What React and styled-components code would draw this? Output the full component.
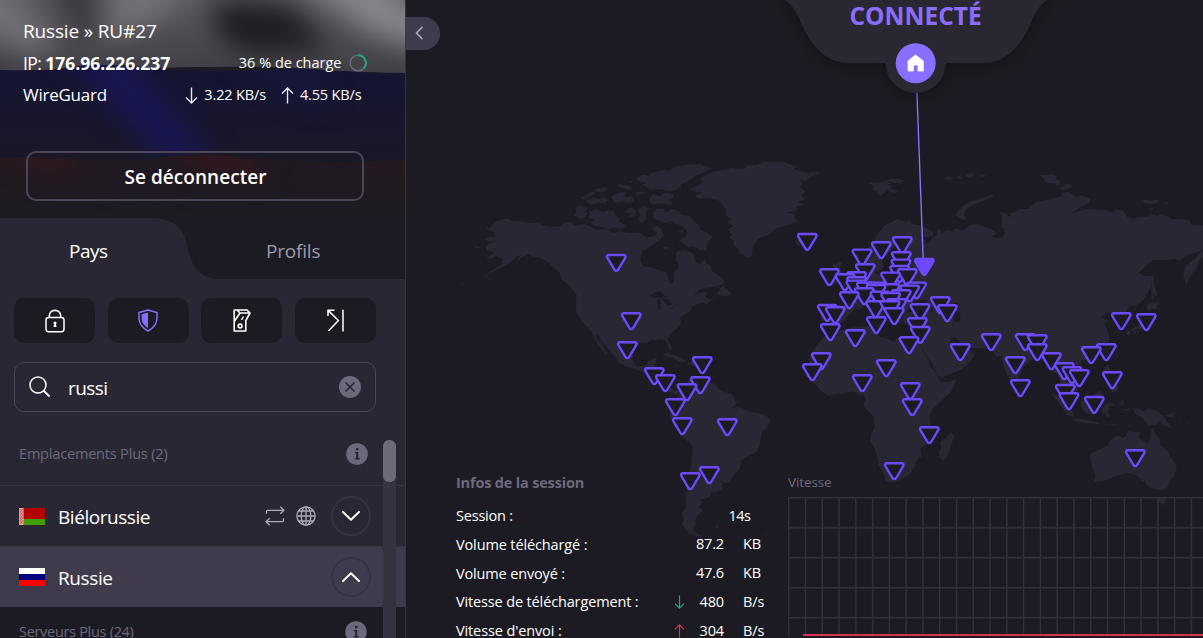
import React from "react";
import styled, { createGlobalStyle, css } from "styled-components";

const GlobalStyle = createGlobalStyle`
  *, *::before, *::after { box-sizing: border-box; }
  body {
    margin: 0;
    overflow: hidden;
    background: #1c1b23;
    font-family: "Open Sans", "Noto Sans", sans-serif;
  }
  button { font-family: inherit; border: 0; padding: 0; cursor: pointer; }
  svg { display: block; flex: none; }
`;

const Window = styled.div`
  display: flex;
  width: 1203px;
  height: 638px;
  overflow: hidden;
  background: #1c1b23;
  color: #fff;
`;

const Label = styled.span`
  display: block;
  font-size: ${(p) => p.$size || 14.5}px;
  font-weight: ${(p) => p.$weight || 400};
  letter-spacing: ${(p) => p.$track || 0}px;
  line-height: 24px;
  color: ${(p) => p.$color || "#fff"};
  white-space: pre;
`;

/* ---------- sidebar ---------- */

const Sidebar = styled.aside`
  display: flex;
  flex-direction: column;
  flex: none;
  width: 406px;
  height: 638px;
  border-right: 1px solid #35333f;
  background: #292733;
`;

const Banner = styled.header`
  position: relative;
  height: 218px;
  flex: none;
  padding: 17px 0 0 23px;
  background: #1c1b23;
`;

const FlagArt = styled.svg`
  position: absolute;
  inset: 0;
`;

const BannerLines = styled.div`
  position: relative;
  display: flex;
  flex-direction: column;
`;

const BannerRow = styled.div`
  display: flex;
  align-items: center;
  height: ${(p) => p.$h || 32}px;
  width: 344px;
`;

const Push = styled.div`
  display: flex;
  align-items: center;
  margin-left: auto;
  gap: ${(p) => p.$gap}px;
  padding-right: ${(p) => p.$right || 0}px;
`;

const Rate = styled.div`
  display: flex;
  align-items: center;
  gap: 6px;
`;

const DisconnectButton = styled.button`
  position: relative;
  display: flex;
  align-items: center;
  justify-content: center;
  width: 338px;
  height: 50px;
  margin: 42px 0 0 3px;
  padding: 2px 0 0 1px;
  border: 2px solid #4a4658;
  border-radius: 10px;
  background: rgba(28, 27, 35, 0.35);
  color: #fff;
`;

const Tabs = styled.nav`
  position: relative;
  display: flex;
  flex: none;
  height: 61px;
  background: #1c1b23;
`;

const TabShape = styled.svg`
  position: absolute;
  inset: 0;
`;

const Tab = styled.div`
  position: relative;
  display: flex;
  align-items: center;
  padding: 5px 0 0 ${(p) => p.$left}px;
  width: ${(p) => p.$width}px;
`;

const Filters = styled.div`
  display: grid;
  grid-template-columns: repeat(4, 81px);
  column-gap: 12.67px;
  padding: 19px 0 0 14px;
`;

const FilterButton = styled.button`
  display: flex;
  align-items: center;
  justify-content: center;
  height: 45px;
  border-radius: 10px;
  background: #1c1b23;
`;

const Search = styled.div`
  display: flex;
  align-items: center;
  flex: none;
  width: 362px;
  height: 50px;
  margin: 19px 0 0 14px;
  padding: 0 14px 0 14px;
  border: 1px solid #4a4658;
  border-radius: 10px;
`;

const SearchText = styled.div`
  flex: 1;
  padding: 1px 0 0 17px;
`;

const List = styled.div`
  position: relative;
  flex: 1;
  margin-top: 10px;
  overflow: hidden;
`;

const GroupHeading = styled.div`
  display: flex;
  align-items: center;
  justify-content: space-between;
  height: ${(p) => p.$h}px;
  padding: 0 ${(p) => p.$right}px 0 19px;
  background: ${(p) => (p.$dark ? "#1c1b23" : "transparent")};
`;

const CountryRow = styled.div`
  display: flex;
  align-items: center;
  height: 61px;
  padding: 0 34px 0 19px;
  ${(p) =>
    p.$open
      ? css`
          background: #3f3b4c;
          border-top: 1px solid #35333f;
        `
      : css`
          border-top: 1px solid #383542;
        `}
`;

const CountryName = styled.div`
  padding: 1px 0 0 13px;
  flex: 1;
`;

const Features = styled.div`
  display: flex;
  align-items: center;
  gap: 11px;
  margin-right: 15px;
`;

const Expander = styled.button`
  display: flex;
  align-items: center;
  justify-content: center;
  width: 40px;
  height: 40px;
  border: 2px solid #35333f;
  border-radius: 50%;
  background: transparent;
`;

const ScrollTrack = styled.div`
  position: absolute;
  top: 18px;
  right: 9px;
  bottom: 0;
  width: 13px;
  border-radius: 7px 7px 0 0;
  background: #35333f;
`;

const ScrollThumb = styled.div`
  height: 42px;
  border-radius: 6px;
  background: #6d697d;
`;

/* ---------- main area ---------- */

const Main = styled.main`
  position: relative;
  flex: 1;
  min-width: 0;
  display: flex;
  align-items: flex-end;
`;

const MapCanvas = styled.svg`
  position: absolute;
  left: -406px;
  top: 0;
  pointer-events: none;
`;

const CollapseButton = styled.button`
  position: absolute;
  left: -1px;
  top: 17px;
  width: 35px;
  height: 33px;
  padding: 0 0 1px 9px;
  border-radius: 0 16px 16px 0;
  background: #3f3b4c;
`;

const StatusNotch = styled.div`
  position: absolute;
  left: 364px;
  top: 0;
  width: 300px;
  height: 110px;
`;

const NotchShape = styled.svg`
  position: absolute;
  inset: 0;
  overflow: visible;
`;

const StatusText = styled.div`
  position: relative;
  padding: 4px 0 0 79.5px;
`;

const BottomPanel = styled.div`
  position: relative;
  display: flex;
  height: 168px;
  width: 100%;
`;

const SessionInfo = styled.section`
  width: 382px;
  padding: 1px 0 0 50px;
`;

const SessionTitle = styled.div`
  height: 31px;
`;

const SessionRow = styled.div`
  display: grid;
  grid-template-columns: 214px 30px 26px 1fr;
  align-items: center;
  height: 28.65px;
`;

const ArrowCell = styled.div`
  padding-left: 4px;
`;

const Value = styled.div`
  display: flex;
  justify-content: flex-end;
  margin: ${(p) => (p.$lift ? "-2px" : 0)} 2px 0 0;
`;

const Unit = styled.div`
  padding-left: 17px;
  margin-top: ${(p) => (p.$lift ? "-2px" : 0)};
`;

const SessionTime = styled.div`
  grid-column: 3 / 5;
  padding-left: 28.5px;
`;

const SpeedSection = styled.section`
  flex: 1;
  min-width: 0;
  overflow: hidden;
`;

const ChartTitle = styled.div`
  height: 24px;
`;

const CHART_TOP = 3;

const landNorthWest =
  "M75,235 L88,232 L100,222 L112,213 L140,205 L155,212 L175,214 L200,218 L230,218 L255,227 L275,230 L300,228 L310,220 L330,215 L345,225 L375,222 L395,232 L410,240 L440,238 L462,250 L480,243 L500,248 L540,250 L560,262 L585,258 L592,250 L575,235 L590,226 L605,238 L612,256 L600,270 L590,275 L570,290 L548,305 L540,325 L545,340 L552,350 L575,352 L590,358 L620,368 L624,385 L628,398 L635,403 L642,392 L640,368 L655,356 L656,345 L648,330 L650,305 L670,300 L685,303 L700,312 L704,330 L712,338 L722,342 L735,325 L740,340 L752,348 L756,362 L770,373 L790,385 L794,402 L770,408 L740,414 L718,420 L702,434 L735,425 L742,430 L735,440 L750,447 L768,440 L775,430 L765,442 L740,462 L728,458 L715,462 L695,472 L690,485 L668,498 L658,505 L665,515 L658,528 L645,540 L628,556 L622,568 L632,585 L634,602 L627,596 L618,572 L605,567 L590,570 L572,570 L562,578 L540,578 L522,600 L517,630 L530,648 L555,648 L566,632 L590,623 L585,648 L575,657 L602,661 L608,690 L625,712 L645,722 L660,722 L650,735 L630,726 L605,706 L585,688 L565,668 L540,662 L500,650 L475,638 L466,622 L448,602 L430,580 L415,556 L406,548 L412,565 L430,592 L444,612 L440,616 L424,598 L408,572 L398,552 L382,530 L365,512 L350,490 L348,465 L350,432 L342,418 L322,402 L305,388 L298,368 L280,352 L262,335 L240,322 L222,320 L205,314 L185,322 L168,336 L182,316 L170,318 L160,330 L135,346 L100,364 L60,390 L95,362 L128,342 L122,335 L130,328 L108,318 L95,326 L75,325 L92,316 L105,306 L82,302 L76,290 L88,280 L110,274 L88,274 L70,268 L84,262 L108,262 L100,245 Z";
const landSouthAmerica =
  "M358,185 L372,165 L382,158 L386,150 L398,146 L396,155 L410,152 L440,158 L462,160 L478,178 L492,186 L512,190 L524,204 L528,222 L515,235 L535,230 L552,238 L580,246 L605,252 L625,262 L630,275 L622,292 L606,306 L602,322 L600,345 L592,362 L580,372 L560,380 L542,392 L543,408 L532,426 L518,440 L508,456 L494,460 L482,452 L475,445 L488,462 L486,478 L470,486 L450,488 L450,500 L436,506 L422,508 L426,520 L418,530 L428,542 L412,558 L404,572 L408,582 L398,594 L404,604 L415,613 L432,618 L412,620 L390,612 L375,600 L366,580 L372,566 L366,548 L378,530 L376,510 L384,450 L394,400 L398,350 L388,338 L360,315 L345,285 L328,262 L330,240 L340,215 L355,198 Z";
const arcticIslands = [
  "M345,172 L362,166 L382,176 L376,185 L384,190 L376,202 L360,207 L343,196 L350,184 Z",
  "M392,184 L412,178 L428,186 L446,180 L462,184 L468,198 L480,204 L476,214 L498,228 L486,237 L462,234 L448,238 L430,232 L400,228 L392,216 L408,210 L384,204 Z",
  "M578,190 L590,178 L610,176 L618,186 L640,176 L656,184 L668,194 L690,198 L700,212 L718,225 L722,240 L740,246 L758,262 L746,275 L738,290 L742,302 L720,300 L700,288 L688,292 L668,278 L655,272 L672,262 L684,248 L664,226 L648,222 L640,212 L616,218 L600,212 L582,206 Z",
  "M530,82 L552,74 L570,78 L572,68 L610,60 L630,62 L640,50 L680,44 L720,42 L735,50 L758,54 L722,72 L700,80 L690,90 L660,104 L664,112 L648,120 L628,124 L600,118 L572,120 L556,108 L545,104 L560,98 L532,92 Z",
  "M565,150 L580,132 L600,138 L616,128 L640,132 L640,142 L620,150 L640,156 L632,164 L600,160 L575,164 Z",
  "M360,146 L384,132 L396,124 L408,128 L388,142 L372,148 Z",
  "M400,120 L430,112 L444,114 L436,124 L414,126 Z",
  "M374,154 L400,142 L418,148 L432,140 L444,150 L436,160 L418,158 L392,164 Z",
  "M452,140 L478,128 L500,126 L494,138 L504,144 L512,136 L524,150 L508,160 L486,154 L466,158 Z",
  "M474,102 L500,106 L522,116 L500,118 L480,112 Z",
  "M524,128 L552,124 L556,132 L534,134 Z",
  "M500,178 L516,172 L528,184 L524,198 L506,202 L512,190 L496,190 Z",
  "M534,178 L548,170 L566,176 L556,188 L558,208 L546,220 L534,208 L540,194 Z",
  "M506,94 L518,92 L512,100 Z",
  "M608,292 L628,290 L618,300 Z",
  "M656,242 L670,238 L668,248 Z",
  "M772,434 L782,412 L796,404 L792,416 L808,424 L816,436 L796,438 Z",
  "M0,400 L14,398 L10,402 Z M42,288 L60,292 L52,296 Z",
  "M330,408 L344,416 L358,432 L346,430 Z",
  "M606,612 L628,610 L660,622 L682,634 L658,636 L640,624 L616,618 Z M686,636 L704,632 L720,642 L704,648 L682,644 Z",
];
const greenland =
  "M686,118 L712,108 L732,94 L718,88 L742,72 L764,64 L800,60 L812,54 L856,56 L862,46 L890,46 L912,36 L975,36 L990,44 L1015,48 L1000,58 L1030,66 L1080,68 L1052,80 L1038,92 L1020,90 L1028,100 L1018,112 L1038,124 L1024,134 L1034,148 L1012,156 L1030,164 L1008,168 L1014,180 L980,188 L1008,192 L1000,202 L1016,212 L985,226 L950,234 L925,254 L896,266 L885,280 L878,296 L874,322 L858,322 L848,312 L838,310 L834,296 L820,284 L822,272 L808,264 L816,252 L802,240 L820,228 L800,218 L816,210 L800,196 L796,176 L778,152 L750,144 L715,146 L704,138 L728,128 L700,124 Z";
const eurasia =
  "M232,398 L258,390 L268,380 L256,368 L262,350 L245,345 L240,322 L252,304 L276,286 L286,262 L300,244 L316,226 L336,216 L352,208 L372,214 L390,212 L396,222 L420,226 L444,238 L460,246 L458,258 L440,262 L426,262 L438,272 L430,282 L452,276 L456,262 L472,256 L470,242 L482,236 L484,250 L500,240 L520,242 L522,236 L548,240 L556,234 L575,224 L590,222 L612,230 L632,236 L650,250 L640,258 L660,262 L676,250 L672,235 L664,232 L666,200 L660,188 L680,190 L684,198 L694,200 L688,190 L704,186 L718,178 L748,176 L752,168 L770,156 L800,150 L826,144 L844,138 L846,128 L866,126 L888,140 L905,136 L930,146 L930,158 L904,170 L876,188 L900,182 L928,176 L960,180 L970,178 L996,186 L1010,178 L1030,182 L1040,200 L1060,206 L1082,200 L1100,202 L1110,190 L1130,198 L1140,192 L1165,200 L1172,208 L1200,206 L1228,210 L1236,226 L1269,226 L1269,300 L1255,306 L1240,308 L1218,318 L1200,332 L1184,326 L1160,330 L1120,330 L1100,344 L1075,370 L1100,380 L1115,376 L1118,395 L1108,420 L1092,446 L1070,466 L1050,468 L1040,482 L1036,500 L1042,515 L1030,524 L1018,508 L1010,492 L988,486 L960,500 L972,506 L986,510 L972,522 L985,548 L990,566 L980,590 L952,615 L920,630 L895,632 L882,650 L895,670 L900,700 L892,720 L880,728 L862,706 L852,702 L850,720 L864,745 L872,770 L860,762 L846,736 L842,700 L832,670 L818,668 L808,640 L790,612 L775,618 L758,626 L735,646 L722,664 L716,690 L704,712 L694,700 L680,670 L668,640 L664,615 L650,622 L640,606 L622,596 L580,594 L560,590 L545,580 L524,562 L510,566 L520,590 L530,602 L545,606 L560,592 L584,612 L574,636 L540,660 L482,684 L474,674 L450,632 L424,590 L418,575 L428,554 L424,530 L400,536 L378,524 L368,512 L372,492 L400,484 L430,478 L462,484 L452,470 L430,458 L438,448 L418,456 L400,460 L385,478 L378,490 L366,494 L358,518 L345,522 L334,500 L318,480 L300,466 L290,462 L298,480 L318,498 L308,506 L298,518 L290,498 L268,480 L255,468 L238,476 L222,478 L214,490 L200,500 L194,514 L176,524 L160,524 L150,516 L126,514 L122,500 L130,480 L124,466 L150,462 L196,468 L206,460 L200,436 L182,424 L206,420 L220,410 Z";
const africa =
  "M134,48 L152,40 L178,34 L210,24 L250,18 L286,16 L292,22 L286,40 L300,50 L326,58 L344,66 L352,52 L372,50 L392,58 L418,62 L424,84 L440,112 L452,140 L470,160 L482,186 L505,186 L528,178 L524,196 L510,218 L486,240 L458,268 L448,290 L452,318 L456,345 L440,375 L420,386 L425,410 L408,422 L404,440 L385,466 L355,483 L328,486 L314,482 L314,465 L296,435 L290,404 L284,388 L270,360 L276,336 L285,320 L278,286 L262,270 L250,258 L257,238 L250,224 L236,226 L220,214 L190,220 L165,222 L142,226 L120,210 L104,190 L82,170 L74,152 L88,132 L90,112 L100,90 L118,66 Z";
const northernIslands = [
  "M528,192 L548,170 L566,156 L598,146 L636,134 L642,140 L610,152 L580,164 L560,178 L552,192 L560,208 L548,210 L534,202 Z",
  "M264,98 L292,98 L318,92 L332,100 L322,106 L340,108 L330,114 L356,124 L340,130 L318,118 L312,130 L302,138 L290,126 L276,118 L284,108 Z",
  "M316,90 L352,86 L374,92 L360,100 L336,98 Z",
  "M488,84 L510,80 L524,84 L508,90 Z M530,78 L550,82 L540,88 Z M556,74 L576,68 L582,78 L566,84 Z M590,76 L620,74 L606,82 Z",
  "M780,74 L796,76 L812,72 L830,78 L828,88 L842,94 L836,106 L820,100 L798,98 L790,86 Z",
  "M838,114 L856,106 L868,100 L880,110 L864,118 L848,120 Z",
  "M1084,154 L1098,148 L1110,152 L1130,150 L1136,158 L1112,162 L1092,160 Z M1144,154 L1172,158 L1160,162 Z M1102,176 L1122,174 L1118,182 Z",
  "M46,272 L60,264 L90,262 L104,272 L92,284 L66,288 L50,284 Z",
  "M158,346 L180,334 L186,342 L178,354 L190,372 L206,396 L214,410 L196,416 L178,420 L190,404 L180,394 L188,384 L174,370 L166,362 Z",
  "M148,386 L166,380 L172,396 L160,406 L146,404 Z",
  "M1210,372 L1216,350 L1238,330 L1262,306 L1269,302 L1269,322 L1258,330 L1252,352 L1236,372 L1218,404 Z",
  "M1116,376 L1122,380 L1122,400 L1128,420 L1132,440 L1122,434 L1120,452 L1114,440 Z",
  "M1100,466 L1116,458 L1144,456 L1128,468 L1130,476 L1110,478 L1102,484 Z M1100,486 L1112,500 L1108,520 L1090,536 L1066,540 L1050,544 L1060,532 L1082,522 L1096,506 Z M1040,540 L1052,546 L1046,558 L1038,550 Z M1060,544 L1076,542 L1064,552 Z",
  "M884,636 L900,628 L908,634 L898,644 L886,644 Z",
  "M974,650 L986,646 L990,660 L984,676 L996,690 L986,692 L974,678 Z M986,714 L1008,700 L1016,718 L1006,728 L992,722 Z",
];
const southernIslands = [
  "M515,334 L522,350 L512,382 L502,415 L488,422 L478,412 L477,396 L484,384 L480,366 L498,354 Z",
  "M814,220 L830,226 L850,248 L872,268 L882,282 L880,292 L862,284 L846,262 L828,240 Z",
  "M876,296 L900,296 L930,302 L962,308 L954,312 L920,310 L888,304 Z M968,312 L990,314 L1014,312 L1000,318 L974,316 Z",
  "M902,244 L920,240 L940,226 L958,212 L968,220 L962,238 L966,256 L952,270 L944,284 L918,280 L906,266 Z",
  "M968,262 L976,252 L1000,250 L1004,256 L984,260 L990,266 L980,276 L992,288 L984,292 L974,280 L966,288 Z",
  "M1022,244 L1030,240 L1028,258 L1022,256 Z M1024,268 L1050,266 L1046,272 Z",
  "M1058,264 L1078,266 L1088,274 L1106,266 L1130,274 L1152,288 L1158,300 L1176,324 L1154,318 L1138,304 L1128,314 L1104,318 L1098,306 L1086,292 L1068,284 Z",
  "M1156,288 L1178,278 L1188,284 L1174,292 Z M1198,290 L1208,296 L1202,296 Z M1216,304 L1232,314 L1224,312 Z M1240,318 L1248,324 L1242,324 Z",
  "M930,404 L940,396 L962,388 L982,376 L990,362 L1006,350 L1016,346 L1028,354 L1040,346 L1044,332 L1062,336 L1082,336 L1076,354 L1094,366 L1104,370 L1112,352 L1114,326 L1120,326 L1128,346 L1138,352 L1142,378 L1162,392 L1170,410 L1186,428 L1190,446 L1182,470 L1168,486 L1164,500 L1142,512 L1128,506 L1112,504 L1098,492 L1094,480 L1086,488 L1080,474 L1066,464 L1044,460 L1012,466 L990,476 L968,484 L942,486 L946,466 L936,442 L932,424 Z",
  "M1134,530 L1146,532 L1158,528 L1156,548 L1148,556 L1138,548 Z",
];
const inlandWaters = [
  "M312,348 L306,332 L326,310 L344,288 L356,286 L352,304 L340,316 L360,324 L386,318 L380,326 L352,330 L360,342 L338,352 L334,366 L300,376 L282,368 L300,362 Z",
  "M398,478 L402,456 L418,450 L434,456 L446,450 L440,462 L462,478 L440,482 L416,474 Z",
  "M512,464 L530,458 L538,470 L532,480 L542,496 L540,516 L522,516 L520,496 L512,480 Z",
  "M630,254 L650,258 L668,252 L670,262 L648,264 Z",
];
const lakes = [
  "M566,440 L585,426 L600,424 L616,440 L600,444 Z",
  "M592,450 L600,448 L602,474 L594,480 Z M608,446 L622,448 L638,462 L626,468 L614,458 Z M622,478 L644,470 L640,476 Z M642,466 L666,462 L650,468 Z",
];

const servers = [
  [807.3, 233], [902.3, 236.3], [881.3, 241.3], [862, 248.6], [901.3, 251.3], [616.3, 254],
  [901, 258.6], [865.3, 263.3], [899.6, 265], [907.3, 268.3], [829.3, 268.3], [856.6, 271.3],
  [890.6, 271.6], [845, 273.3], [856.6, 276.3], [856, 279.6], [916.6, 281.6], [866.3, 281.6],
  [876.6, 281.6], [890, 283.3], [876, 284], [909.6, 284.6], [864.3, 287.3], [901.3, 289.3],
  [880, 290.6], [849.3, 291.3], [890.6, 292], [940.3, 296.3], [896.6, 298.3], [875.6, 300.3],
  [890, 300.3], [920, 303.3], [827.3, 304], [947.3, 304.3], [835.3, 306.3], [894.3, 307.3],
  [1121.3, 312.3], [631.3, 312.3], [1146.3, 313.3], [876.3, 316.3], [917.3, 317.3],
  [830.3, 323.3], [920.3, 326], [855.3, 329.3], [991.3, 333.3], [1025.3, 333.3],
  [1037.3, 334.3], [909, 336.3], [627.3, 341.3], [960.3, 343.3], [1037.3, 343.3],
  [1106.3, 343.3], [1091.3, 346.3], [821.3, 352.3], [1051.3, 352.3], [702.3, 356.3],
  [1015.3, 356.3], [886.3, 359.3], [1064.3, 362.3], [812.3, 363.3], [1072, 366.3],
  [654.3, 367.3], [1079.3, 369.3], [1112.3, 371.3], [665.3, 374.3], [862.3, 374.3],
  [700.3, 376.3], [1020.3, 379.3], [910.3, 382.3], [687, 383.3], [1065.3, 384],
  [1069, 392.3], [1094.3, 396], [675.3, 398.3], [912.3, 398.3], [682.3, 417.3],
  [727.3, 418.3], [929.3, 426.3], [1135.3, 449.3], [894.3, 462.3], [709.3, 466.3],
  [690.3, 472.3],
];

function ServerPin({ x, y, active }) {
  return (
    <path
      transform={`translate(${x} ${y})`}
      d="M-7.6,1 H7.6 Q10.1,1.3 8.9,3.9 L1.8,15.7 Q0,17.9 -1.8,15.7 L-8.9,3.9 Q-10.1,1.3 -7.6,1 Z"
      fill={active ? "#6d4aff" : "#1c1b23"}
      stroke="#6d4aff"
      strokeWidth="2.4"
      strokeLinejoin="round"
    />
  );
}

function WorldMap() {
  const land = "#292733";
  return (
    <MapCanvas width="1203" height="638" viewBox="0 0 1203 638">
      <g fill={land}>
        <g transform="translate(460 150) scale(0.33333)">
          <path d={landNorthWest} />
          <path d={greenland} />
          {arcticIslands.map((d) => <path key={d} d={d} />)}
          <g fill="#1c1b23">{lakes.map((d) => <path key={d} d={d} />)}</g>
        </g>
        <g transform="translate(560 330) scale(0.33333)">
          <path d={landSouthAmerica} />
          <path d="M462,590 L478,588 L474,594 Z M612,612 L622,614 L618,618 Z M260,224 L268,228 L264,232 Z" />
        </g>
        <g transform="translate(780 150) scale(0.33333)">
          <path d={eurasia} />
          {northernIslands.map((d) => <path key={d} d={d} />)}
          <g fill="#1c1b23">{inlandWaters.map((d) => <path key={d} d={d} />)}</g>
        </g>
        <g transform="translate(780 320) scale(0.33333)">
          <path d={africa} />
          {southernIslands.map((d) => <path key={d} d={d} />)}
        </g>
      </g>
      {servers.map(([x, y]) => <ServerPin key={`${x}-${y}`} x={x} y={y} />)}
      <path d="M916.8,90 L923.2,260" stroke="#8a6eff" strokeWidth="1.4" />
      <ServerPin x={924.3} y={258} active />
    </MapCanvas>
  );
}

function FlagBackdrop() {
  return (
    <FlagArt width="405" height="218" viewBox="0 0 405 218">
      <defs>
        <linearGradient id="grey" x1="0" y1="0" x2="0" y2="1">
          <stop offset="0" stopColor="#58575d" />
          <stop offset="1" stopColor="#3e3d43" />
        </linearGradient>
        <linearGradient id="blue" x1="0" y1="0" x2="0" y2="1">
          <stop offset="0" stopColor="#151433" />
          <stop offset="1" stopColor="#191828" />
        </linearGradient>
        <linearGradient id="red" x1="0" y1="0" x2="0" y2="1">
          <stop offset="0" stopColor="#26181f" />
          <stop offset="1" stopColor="#1c1b23" />
        </linearGradient>
        <filter id="soft" filterUnits="userSpaceOnUse" x="-60" y="-60" width="525" height="340" colorInterpolationFilters="sRGB">
          <feGaussianBlur stdDeviation="13" />
        </filter>
        <clipPath id="top"><path d="M0,0 H405 V73 Q360,73 310,69 T150,68 Q110,63 80,66 Q50,72 0,70 Z" /></clipPath>
        <clipPath id="middle"><path d="M0,70 Q50,72 80,66 Q110,63 150,68 T310,69 Q360,73 405,73 V160 L340,162 Q280,162 220,155 Q180,154 150,160 Q90,162 50,157 H0 Z" /></clipPath>
        <clipPath id="bottom"><path d="M0,157 H50 Q90,162 150,160 Q180,154 220,155 Q280,162 340,162 L405,160 V218 H0 Z" /></clipPath>
      </defs>
      <g clipPath="url(#top)">
        <rect width="405" height="80" fill="url(#grey)" />
        <g filter="url(#soft)">
          <path d="M30,-40 L75,-40 L105,30 L80,35 Z" fill="#38373d" />
          <path d="M-40,-30 L10,-10 L60,45 L30,55 L-40,20 Z" fill="#717075" />
          <path d="M120,-40 L210,-40 L160,20 L100,40 Z" fill="#717075" />
          <path d="M215,0 L290,5 L330,50 L250,56 L215,35 Z" fill="#1f1e24" />
          <path d="M260,-50 L350,-50 L440,30 L440,55 L370,33 Z" fill="#85848a" />
          <path d="M375,-40 L440,-40 L440,8 Z" fill="#2b2a30" />
        </g>
      </g>
      <g clipPath="url(#middle)">
        <rect y="60" width="405" height="105" fill="url(#blue)" />
        <g filter="url(#soft)">
          <path d="M60,50 L125,50 L215,155 L165,165 L120,115 Z" fill="#181750" />
          <path d="M230,50 L310,50 L330,105 L290,95 Z" fill="#18173c" />
        </g>
      </g>
      <g clipPath="url(#bottom)">
        <rect y="150" width="405" height="70" fill="url(#red)" />
        <g filter="url(#soft)">
          <path d="M0,140 L50,145 L90,180 L40,175 Z" fill="#38181f" />
          <path d="M165,140 L220,140 L270,178 L210,172 Z" fill="#42171e" />
          <path d="M90,165 L140,165 L180,185 L120,185 Z" fill="#20192a" />
        </g>
      </g>
    </FlagArt>
  );
}

function Arrow({ up, color = "#e6e5ea", w = 13, h = 17 }) {
  return (
    <svg width={w} height={h} viewBox="0 0 13 17" fill="none" stroke={color} strokeWidth="1.4">
      <path d={up ? "M6.5,16.5 V1 M1,6.5 L6.5,1 L12,6.5" : "M6.5,0.5 V16 M1,10.5 L6.5,16 L12,10.5"} />
    </svg>
  );
}

function InfoIcon() {
  return (
    <svg width="22" height="22" viewBox="0 0 22 22">
      <circle cx="11" cy="11" r="10.8" fill="#6d697d" />
      <g fill="#24222c">
        <rect x="10" y="5" width="2.4" height="2.2" />
        <path d="M8.8,9 H12.2 V15.2 H13.8 V16.4 H8.6 V15.2 H10.2 V10.3 H8.8 Z" />
      </g>
    </svg>
  );
}

function Chevron({ up }) {
  return (
    <svg width="18" height="10" viewBox="0 0 18 10" fill="none" stroke="#fff" strokeWidth="1.9" strokeLinecap="round" strokeLinejoin="round">
      <path d={up ? "M1,9 L9,1.3 L17,9" : "M1,1 L9,8.7 L17,1"} />
    </svg>
  );
}

const LockIcon = () => (
  <svg width="20" height="24" viewBox="0 0 20 24" fill="none" stroke="#fff" strokeWidth="1.5">
    <rect x="1" y="8.5" width="18" height="14.2" rx="2.6" />
    <path d="M4.3,8.5 V6.5 Q4.8,1.5 10,1.2 Q15.2,1.5 15.7,6.5 V8.5" />
    <circle cx="10" cy="13.9" r="1.5" fill="#fff" stroke="none" />
    <path d="M10,14 V17 M8.6,17.2 H11.4" strokeWidth="1.7" />
  </svg>
);

const ShieldIcon = () => (
  <svg width="20" height="23" viewBox="0 0 20 23">
    <path d="M10,1 L19,3.5 V9.5 Q18.5,17.5 10,22 Q1.5,17.5 1,9.5 V3.5 Z" fill="none" stroke="#8a6eff" strokeWidth="1.5" strokeLinejoin="round" />
    <path d="M10,3.5 L3.6,5.2 V9.8 Q4.3,15.6 10,19.2 Z" fill="#8a6eff" />
  </svg>
);

const SwitchIcon = () => (
  <svg width="18" height="23" viewBox="0 0 18 23" fill="none" stroke="#fff" strokeWidth="1.6" strokeLinejoin="round">
    <path d="M1.2,1 H14 L17,4 L12.8,11.5 V22 H1.2 Z" />
    <path d="M4.3,1.2 L7,4 H17 M7,4 L1.4,12.2" />
    <path d="M10.5,7.5 L8.5,11" strokeWidth="1.4" />
    <circle cx="7.1" cy="17" r="1.9" />
  </svg>
);

const RelayIcon = () => (
  <svg width="17" height="23" viewBox="0 0 17 23" fill="none" stroke="#fff" strokeWidth="1.5">
    <path d="M1,7 V1.3 H7.5 M1.4,1.6 L11.4,11.5 L1.4,22 M16,0.8 V22.5" />
  </svg>
);

const BelarusFlag = () => (
  <svg width="26" height="17" viewBox="0 0 26 17">
    <rect width="26" height="11.3" fill="#b10000" />
    <rect y="11" width="26" height="6" fill="#429f00" />
    <rect width="4.6" height="17" fill="#e5a5a5" />
    <path d="M0.8,1 L3.8,4 L0.8,7 L3.8,10 L0.8,13 L3.8,16 M3.8,1 L0.8,4 L3.8,7 L0.8,10 L3.8,13 L0.8,16" stroke="#c64a4a" strokeWidth="0.8" fill="none" />
  </svg>
);

const RussiaFlag = () => (
  <svg width="26" height="18" viewBox="0 0 26 18">
    <rect width="26" height="6" fill="#fff" />
    <rect y="6" width="26" height="6" fill="#00007e" />
    <rect y="12" width="26" height="6" fill="#fe0000" />
  </svg>
);

const P2PIcon = () => (
  <svg width="20" height="20" viewBox="0 0 20 20" fill="none" stroke="#aba8b8" strokeWidth="1.3">
    <path d="M1.5,7.8 V5.3 Q1.5,4.3 2.5,4.3 H19 M15.3,0.8 L19,4.3 L15.3,7.8" />
    <path d="M18.5,12.2 V14.7 Q18.5,15.7 17.5,15.7 H1 M4.7,12.2 L1,15.7 L4.7,19.2" />
  </svg>
);

const GlobeIcon = () => (
  <svg width="20" height="20" viewBox="0 0 20 20" fill="none" stroke="#aba8b8" strokeWidth="1.3">
    <circle cx="10" cy="10" r="9.1" />
    <ellipse cx="10" cy="10" rx="4.8" ry="9.1" />
    <path d="M10,1 V19 M1,10 H19 M2.6,5 H17.4 M2.6,15 H17.4" />
  </svg>
);

const sessionRows = [
  { label: "Session :", track: -0.2, value: "14s", wide: true },
  { label: "Volume téléchargé :", track: -0.13, value: "87.2", unit: "KB", lift: true },
  { label: "Volume envoyé :", track: -0.15, value: "47.6", unit: "KB", lift: true },
  { label: "Vitesse de téléchargement :", track: -0.14, arrow: "down", value: "480", unit: "B/s" },
  { label: "Vitesse d'envoi :", track: -0.12, arrow: "up", value: "304", unit: "B/s" },
];

function SpeedChart() {
  const columns = Array.from({ length: 25 }, (_, i) => 0.7 + i * 16.78);
  return (
    <svg width="415" height="142" viewBox="0 0 415 142">
      <g stroke="#32303c" strokeWidth="1.5">
        {columns.map((x) => <path key={x} d={`M${x},${CHART_TOP} V142`} />)}
        {[0, 1, 2, 3, 4].map((i) => <path key={i} d={`M0,${CHART_TOP + 0.7 + i * 30} H415`} />)}
      </g>
      <path d="M15,141.5 H415" stroke="#dc3251" strokeWidth="2.8" />
    </svg>
  );
}

export default function App() {
  return (
    <>
      <GlobalStyle />
      <Window>
        <Sidebar>
          <Banner>
            <FlagBackdrop />
            <BannerLines>
              <BannerRow $h={27}>
                <Label $size={19} $track={-0.16}>Russie » RU#27</Label>
              </BannerRow>
              <BannerRow $h={37}>
                <Label $size={17.5} $track={-0.6}>IP: </Label>
                <Label $size={17.5} $weight={700}>176.96.226.237</Label>
                <Push $gap={7.5}>
                  <Label>36 % de charge</Label>
                  <svg width="18" height="18" viewBox="0 0 18 18" fill="none" strokeWidth="1.5">
                    <circle cx="9" cy="9" r="7.8" stroke="#6d697d" />
                    <path d="M9,1.2 A7.8,7.8 0 0 1 14.6,14.5" stroke="#1ea885" strokeWidth="1.9" />
                  </svg>
                </Push>
              </BannerRow>
              <BannerRow $h={28}>
                <Label $size={17} $track={-0.25}>WireGuard</Label>
                <Push $gap={15} $right={5.5}>
                  <Rate><Arrow /><Label $track={-0.15}>3.22 KB/s</Label></Rate>
                  <Rate><Arrow up /><Label $track={-0.15}>4.55 KB/s</Label></Rate>
                </Push>
              </BannerRow>
            </BannerLines>
            <DisconnectButton>
              <Label $size={19} $weight={600} $track={0.05}>Se déconnecter</Label>
            </DisconnectButton>
          </Banner>

          <Tabs>
            <TabShape width="405" height="61" viewBox="0 0 405 61">
              <path d="M0,0 H153 C177,1 184,13 187,27 C191,48 199,59 215,61 H0 Z" fill="#292733" />
            </TabShape>
            <Tab $left={69} $width={266}><Label $size={19} $track={-0.5}>Pays</Label></Tab>
            <Tab $left={0} $width={139}><Label $size={19} $track={-0.2} $color="#9c99aa">Profils</Label></Tab>
          </Tabs>

          <Filters>
            <FilterButton><LockIcon /></FilterButton>
            <FilterButton><ShieldIcon /></FilterButton>
            <FilterButton><SwitchIcon /></FilterButton>
            <FilterButton><RelayIcon /></FilterButton>
          </Filters>

          <Search>
            <svg width="22" height="22" viewBox="0 0 22 22" fill="none" stroke="#fff" strokeWidth="1.5">
              <circle cx="9" cy="9" r="8" />
              <path d="M14.5,14.5 L20.5,20.5" strokeWidth="1.8" />
            </svg>
            <SearchText><Label $size={19} $track={-0.6}>russi</Label></SearchText>
            <svg width="22" height="22" viewBox="0 0 22 22">
              <circle cx="11" cy="11" r="11" fill="#6d697d" />
              <path d="M6.5,6.5 L15.5,15.5 M15.5,6.5 L6.5,15.5" stroke="#24222c" strokeWidth="1.5" />
            </svg>
          </Search>

          <List>
            <GroupHeading $h={63} $right={37}>
              <Label $track={-0.18} $color="#6d697d">Emplacements Plus (2)</Label>
              <InfoIcon />
            </GroupHeading>
            <CountryRow>
              <BelarusFlag />
              <CountryName><Label $size={19} $track={-0.45}>Biélorussie</Label></CountryName>
              <Features><P2PIcon /><GlobeIcon /></Features>
              <Expander><Chevron /></Expander>
            </CountryRow>
            <CountryRow $open>
              <RussiaFlag />
              <CountryName><Label $size={19} $track={-0.4}>Russie</Label></CountryName>
              <Expander><Chevron up /></Expander>
            </CountryRow>
            <GroupHeading $h={50} $right={38} $dark>
              <Label $track={-0.3} $color="#6d697d">Serveurs Plus (24)</Label>
              <InfoIcon />
            </GroupHeading>
            <ScrollTrack><ScrollThumb /></ScrollTrack>
          </List>
        </Sidebar>

        <Main>
          <WorldMap />
          <CollapseButton>
            <svg width="10" height="14" viewBox="0 0 10 14" fill="none" stroke="#b5b2c2" strokeWidth="1.4">
              <path d="M8.5,0.8 L2.5,7 L8.5,13.2" />
            </svg>
          </CollapseButton>
          <StatusNotch>
            <NotchShape width="300" height="110" viewBox="770 0 300 110">
              <defs>
                <filter id="shade" x="-20%" y="-30%" width="140%" height="170%">
                  <feDropShadow dx="0" dy="2" stdDeviation="7" floodColor="#000" floodOpacity="0.4" />
                </filter>
              </defs>
              <path
                filter="url(#shade)"
                fill="#292733"
                d="M779,-4 C794,4 797,14 802,25 C814,50 828,63 850,63 H885.7 A30,30 0 0 0 945.7,63 H982 C1004,63 1018,50 1030,25 C1035,14 1038,4 1053,-4 Z"
              />
              <circle cx="915.7" cy="63.2" r="20" fill="#8a6eff" />
              <path d="M915.5,55 L922.8,60.4 Q923.3,60.8 923.3,61.5 V71 H918 V65 H913.3 V71 H908 V61.5 Q908,60.8 908.6,60.4 Z" fill="#fff" stroke="#fff" strokeWidth="0.8" strokeLinejoin="round" />
            </NotchShape>
            <StatusText>
              <Label $size={24.5} $weight={700} $color="#8a6eff">CONNECTÉ</Label>
            </StatusText>
          </StatusNotch>

          <BottomPanel>
            <SessionInfo>
              <SessionTitle><Label $weight={700} $track={-0.18} $color="#6d697d">Infos de la session</Label></SessionTitle>
              {sessionRows.map((r) => (
                <SessionRow key={r.label}>
                  <Label $track={r.track}>{r.label}</Label>
                  <ArrowCell>
                    {r.arrow && <Arrow up={r.arrow === "up"} w={11} h={14} color={r.arrow === "up" ? "#dc3251" : "#1ea885"} />}
                  </ArrowCell>
                  {r.wide ? (
                    <SessionTime><Label $track={-0.5}>{r.value}</Label></SessionTime>
                  ) : (
                    <>
                      <Value $lift={r.lift}><Label $track={-0.15}>{r.value}</Label></Value>
                      <Unit $lift={r.lift}><Label $track={-0.1}>{r.unit}</Label></Unit>
                    </>
                  )}
                </SessionRow>
              ))}
            </SessionInfo>
            <SpeedSection>
              <ChartTitle><Label $size={13.5} $track={-0.1} $color="#6d697d">Vitesse</Label></ChartTitle>
              <SpeedChart />
            </SpeedSection>
          </BottomPanel>
        </Main>
      </Window>
    </>
  );
}
